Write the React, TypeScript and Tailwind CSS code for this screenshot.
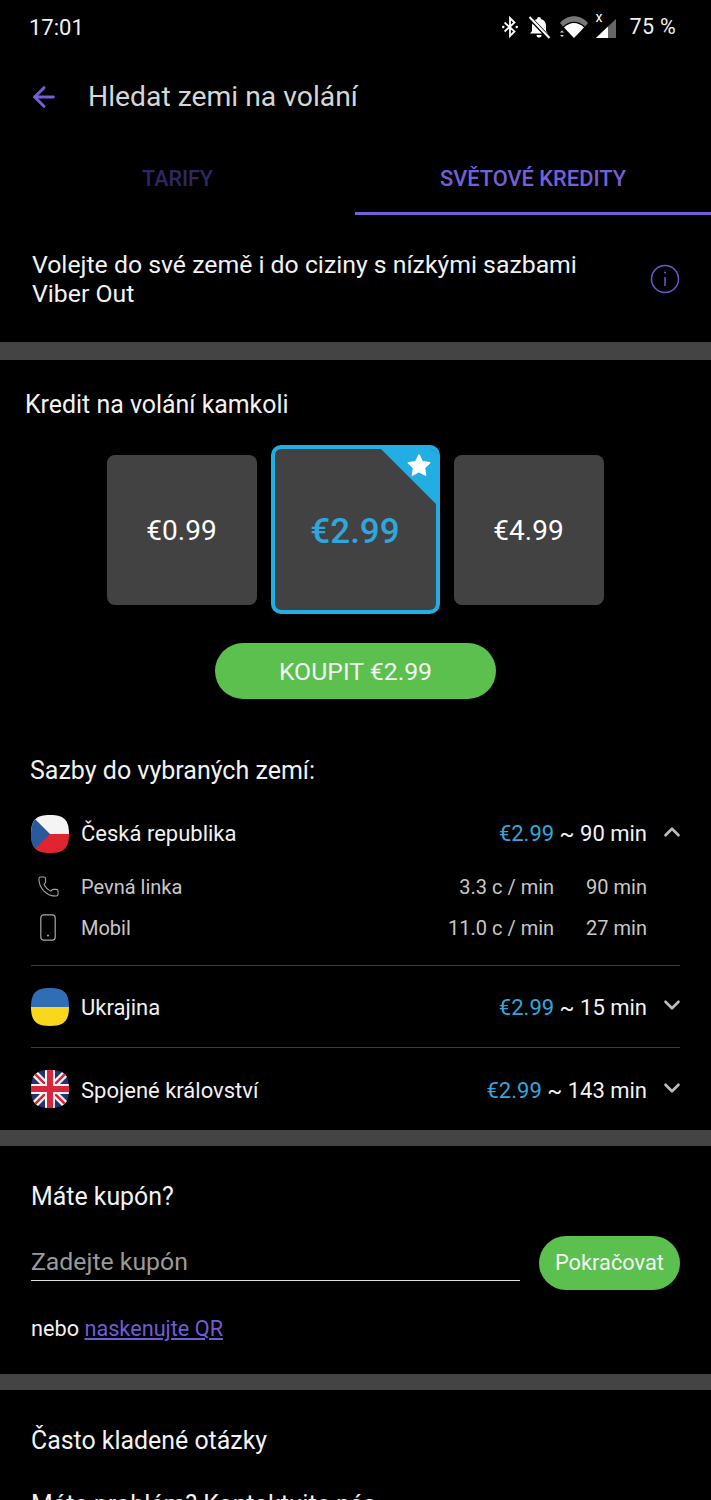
import React from 'react';
import { ArrowLeft, ChevronDown, ChevronUp, Phone } from 'lucide-react';

const SQUIRCLE = 'M19 0C33 0 38 5 38 19S33 38 19 38 0 33 0 19 5 0 19 0z';

const StatusIcons = () => (
  <div className="flex items-center">
    <svg width="18" height="22" viewBox="0 0 20 24" fill="none" stroke="#fff" strokeWidth="2" className="mr-[8px]">
      <path d="M4 7l11 10-5 5V2l5 5L4 17" />
      <circle cx="2.500" cy="12" r="1.400" fill="#fff" stroke="none" />
      <circle cx="17.500" cy="12" r="1.400" fill="#fff" stroke="none" />
    </svg>
    <svg width="24" height="24" viewBox="0 0 24 24" className="mr-[8px]">
      <path d="M12 2a2 2 0 0 1 2 2c3.300 1 5 3.500 5 7v5l2 2.500H3L5 16v-5c0-3.500 1.700-6 5-7a2 2 0 0 1 2-2z" fill="#fff" />
      <path d="M9.500 20h5a2.500 2.500 0 0 1-5 0z" fill="#fff" />
      <path d="M2 2l20 21" stroke="#000" strokeWidth="4" />
      <path d="M2.500 2l20 21" stroke="#fff" strokeWidth="2" />
    </svg>
    <svg width="30" height="24" viewBox="0 0 30 24" className="mr-[6px]">
      <path d="M1 8C8-1 22-1 29 8l-3 3.500C20 5 10 5 4 11.500z" fill="#777" />
      <path d="M5 12.500c6-6 14-6 20 0L15 23z" fill="#fff" />
      <path d="M1 17.500l2-2 2 2zM1 20l4 0-2 2z" fill="#ddd" />
    </svg>
    <div className="relative mr-[13px] h-[24px] w-[22px]">
      <svg width="22" height="24" viewBox="0 0 22 24" className="absolute inset-0">
        <path d="M1 23L21 4v19z" fill="#666" />
        <path d="M1 23L13 11.500V23z" fill="#fff" />
      </svg>
      <span className="absolute left-[1px] top-[-5px] text-[14px] leading-[14px] text-white">x</span>
    </div>
    <span className="text-[21.500px] leading-none tracking-[0.3px] text-[#f0f0f0]">75 %</span>
  </div>
);

const CzFlag = () => (
  <svg viewBox="0 0 38 38" className="h-[38px] w-[38px]">
    <defs>
      <clipPath id="sq1"><path d={SQUIRCLE} /></clipPath>
    </defs>
    <g clipPath="url(#sq1)">
      <rect width="38" height="19" fill="#f4f4f4" />
      <rect y="19" width="38" height="19" fill="#e0252f" />
      <path d="M0 0l19 19L0 38z" fill="#2a5a9c" />
    </g>
  </svg>
);

const UaFlag = () => (
  <svg viewBox="0 0 38 38" className="h-[38px] w-[38px]">
    <defs>
      <clipPath id="sq2"><path d={SQUIRCLE} /></clipPath>
    </defs>
    <g clipPath="url(#sq2)">
      <rect width="38" height="19" fill="#2f6db5" />
      <rect y="19" width="38" height="19" fill="#f9d71c" />
    </g>
  </svg>
);

const UkFlag = () => (
  <svg viewBox="0 0 38 38" className="h-[38px] w-[38px]">
    <defs>
      <clipPath id="sq3"><path d={SQUIRCLE} /></clipPath>
    </defs>
    <g clipPath="url(#sq3)">
      <rect width="38" height="38" fill="#22346b" />
      <path d="M0 0l38 38M38 0L0 38" stroke="#f4f4f4" strokeWidth="7" />
      <path d="M0 0l38 38M38 0L0 38" stroke="#d9263a" strokeWidth="2.500" />
      <path d="M19 0v38M0 19h38" stroke="#f4f4f4" strokeWidth="10" />
      <path d="M19 0v38M0 19h38" stroke="#d9263a" strokeWidth="6" />
    </g>
  </svg>
);

const Divider = ({ h }: { h: string }) => <div className={`${h} w-full bg-[#444444]`} />;

const Row = ({
  flag,
  name,
  mins,
  h,
}: {
  flag: React.ReactNode;
  name: string;
  mins: string;
  h: string;
}) => (
  <div className={`flex ${h} items-center border-t border-[#3d3d3d]`}>
    <div className="mr-[12px]">{flag}</div>
    <span className="pt-[2px] text-[22px] text-[#f2f2f2]">{name}</span>
    <span className="ml-auto pt-[2px] text-[22px] text-[#f2f2f2]">
      <span className="text-[#35a5dc]">€2.99</span> ~ {mins}
    </span>
    <ChevronDown className="ml-[12px] mr-[-5px] mt-[-3px] h-[26px] w-[26px] text-[#bdbdbd]" strokeWidth={2.400} />
  </div>
);

export default function App() {
  return (
    <div className="h-[1500px] w-[711px] overflow-hidden bg-black font-['Roboto',sans-serif] text-white">
      <div className="flex h-[54px] items-center justify-between pl-[29px] pr-[35px]">
        <span className="text-[22px] text-[#f0f0f0]">17:01</span>
        <StatusIcons />
      </div>

      <div className="flex h-[86px] items-center pl-[28px]">
        <ArrowLeft className="h-[32px] w-[32px] text-[#7360d6]" strokeWidth={2.200} />
        <span className="ml-[28px] pt-[1px] text-[28.300px] text-[#d6d6d6]">Hledat zemi na volání</span>
      </div>

      <div className="flex h-[75px]">
        <div className="flex w-[355px] items-center justify-center pt-[3px] text-[21.500px] font-medium text-[#2f2763]">TARIFY</div>
        <div className="flex w-[356px] items-center justify-center border-b-[3px] border-[#7360d6] pt-[6px] text-[21.800px] font-medium text-[#7360d6]">
          SVĚTOVÉ KREDITY
        </div>
      </div>

      <div className="flex h-[127px] items-center justify-between pl-[32px] pr-[31px]">
        <p className="text-[24.800px] leading-[29px] text-[#f2f2f2]">
          Volejte do své země i do ciziny s nízkými sazbami
          <br />
          Viber Out
        </p>
        <svg width="30" height="30" viewBox="0 0 30 30" fill="none" stroke="#6a58d0" strokeWidth="1.500">
          <circle cx="15" cy="15" r="13.500" />
          <path d="M15 13v9" />
          <circle cx="15" cy="8.500" r="1" fill="#6a58d0" stroke="none" />
        </svg>
      </div>

      <Divider h="h-[18px]" />

      <div className="pl-[25px] pt-[30px] text-[24.900px] leading-[30px] text-[#f2f2f2]">Kredit na volání kamkoli</div>

      <div className="mt-[25px] flex items-center justify-center gap-[14px] pr-[1px]">
        <div className="flex h-[150px] w-[150px] items-center justify-center rounded-[8px] bg-[#424242] pt-[3px] text-[28px]">€0.99</div>
        <div className="relative flex h-[169px] w-[169px] items-center justify-center overflow-hidden rounded-[10px] border-[4px] border-[#22ade3] bg-[#424242] pt-[5px] text-[35px] font-medium text-[#2fa6dc]">
          €2.99
          <svg width="63" height="63" viewBox="0 0 63 63" className="absolute right-[-4px] top-[-4px]">
            <path d="M0 0h63v63z" fill="#22ade3" />
            <g transform="translate(3 2)">
              <path d="M39 8l3.300 6.700 7.400 1-5.300 5.200 1.200 7.300-6.600-3.500-6.600 3.500 1.200-7.300-5.300-5.200 7.400-1z" fill="#fff" stroke="#fff" strokeWidth="1.500" strokeLinejoin="round" />
            </g>
          </svg>
        </div>
        <div className="flex h-[150px] w-[150px] items-center justify-center rounded-[8px] bg-[#424242] pt-[3px] text-[28px]">€4.99</div>
      </div>

      <div className="mt-[29px] flex justify-center">
        <div className="flex h-[56px] w-[281px] items-center justify-center rounded-full bg-[#5cc04e] pt-[2px] text-[24.800px] text-[#f4f4f4]">KOUPIT €2.99</div>
      </div>

      <div className="pl-[30px] pt-[55px] text-[25px] leading-[34px] text-[#f2f2f2]">Sazby do vybraných zemí:</div>

      <div className="px-[31px]">
        <div className="mt-[15px] flex h-[61px] items-center">
          <div className="mr-[12px]"><CzFlag /></div>
          <span className="text-[22px] text-[#f2f2f2]">Česká republika</span>
          <span className="ml-auto text-[22px] text-[#f2f2f2]">
            <span className="text-[#35a5dc]">€2.99</span> ~ 90 min
          </span>
          <ChevronUp className="ml-[12px] mr-[-5px] mt-[-4px] h-[26px] w-[26px] text-[#bdbdbd]" strokeWidth={2.400} />
        </div>
        <div className="flex h-[41px] items-center pt-[4px] text-[20px] text-[#c8c8c8]">
          <Phone className="ml-[6px] h-[23px] w-[23px] text-[#a8a8a8]" strokeWidth={1.100} />
          <span className="ml-[21px]">Pevná linka</span>
          <span className="ml-auto">3.3 c / min</span>
          <span className="ml-[32px] mr-[33px]">90 min</span>
        </div>
        <div className="flex h-[41px] items-center pt-[4px] text-[20px] text-[#c8c8c8]">
          <svg width="16" height="27" viewBox="0 0 16 27" fill="none" stroke="#a8a8a8" strokeWidth="1.200" className="ml-[9px]">
            <rect x="0.800" y="0.800" width="14.400" height="25.400" rx="3" />
            <circle cx="8" cy="21.500" r="1" fill="#a8a8a8" stroke="none" />
          </svg>
          <span className="ml-[25px]">Mobil</span>
          <span className="ml-auto">11.0 c / min</span>
          <span className="ml-[32px] mr-[33px]">27 min</span>
        </div>
        <div className="mt-[19px]">
          <Row flag={<UaFlag />} name="Ukrajina" mins="15 min" h="h-[82px]" />
          <Row flag={<UkFlag />} name="Spojené království" mins="143 min" h="h-[83px]" />
        </div>
      </div>

      <Divider h="h-[16px]" />

      <div className="px-[31px]">
        <div className="pt-[36px] text-[24.900px] leading-[30px] text-[#f2f2f2]">Máte kupón?</div>
        <div className="mt-[24px] flex items-start justify-between">
          <div className="flex h-[45px] w-[489px] items-end border-b border-[#e0e0e0] pb-[4px] text-[24.800px] leading-[29px] text-[#9a9a9a]">Zadejte kupón</div>
          <div className="flex h-[54px] w-[141px] items-center justify-center rounded-full bg-[#5cc04e] text-[21.800px] text-[#f4f4f4]">Pokračovat</div>
        </div>
        <div className="pt-[24px] text-[21.700px] leading-[30px] text-[#f2f2f2]">
          nebo <span className="text-[#6f5dd6] underline">naskenujte QR</span>
        </div>
      </div>

      <div className="mt-[30px]"><Divider h="h-[16px]" /></div>

      <div className="px-[31px]">
        <div className="pt-[36px] text-[24.900px] leading-[30px] text-[#f2f2f2]">Často kladené otázky</div>
        <div className="pt-[34px] text-[24.900px] leading-[30px] text-[#f2f2f2]">Máte problém? Kontaktujte nás</div>
      </div>
    </div>
  );
}
